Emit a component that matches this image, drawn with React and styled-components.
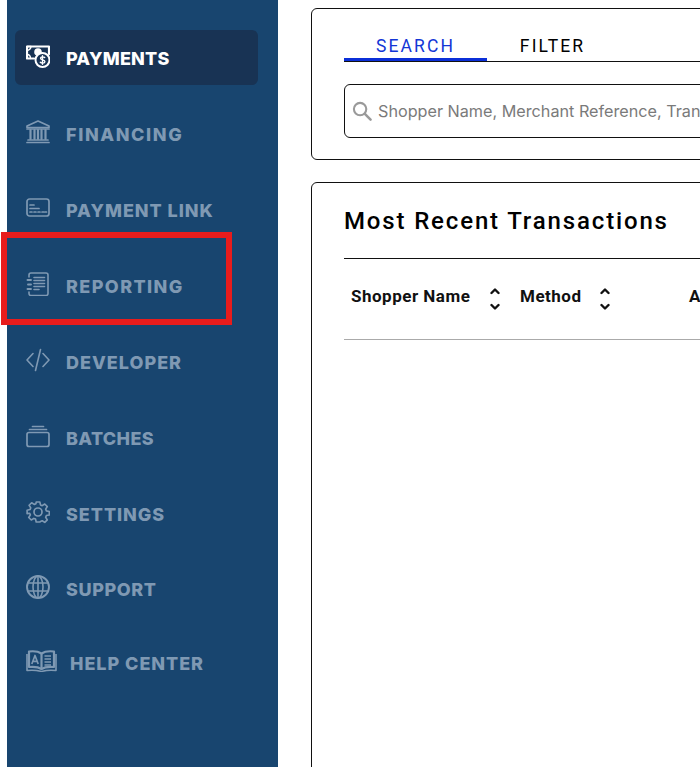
import React from 'react';
import styled, { createGlobalStyle } from 'styled-components';

const GlobalStyle = createGlobalStyle`
  html, body {
    margin: 0;
    padding: 0;
    background: #fff;
    overflow: hidden;
  }
`;

const Page = styled.div`
  position: relative;
  display: flex;
  width: 700px;
  height: 767px;
  padding-left: 7px;
  box-sizing: border-box;
  overflow: hidden;
`;

const Sidebar = styled.nav`
  flex: 0 0 271px;
  background: #18456f;
  padding: 30px 20px 0 8px;
  box-sizing: border-box;
`;

const NavItem = styled.div`
  display: flex;
  align-items: center;
  height: 55px;
  margin-bottom: ${(p) => p.$mb ?? 21}px;
  padding-left: 11px;
  gap: ${(p) => p.$gap || 16}px;
  border-radius: 6px;
  background: ${(p) => (p.$active ? '#183354' : 'transparent')};
  color: ${(p) => (p.$active ? '#ffffff' : '#7f99b3')};
  svg {
    flex: none;
    margin-top: -4px;
  }
`;

const NavLabel = styled.span`
  padding-top: 2px;
  font-family: Inter, "Liberation Sans", sans-serif;
  font-weight: 800;
  font-size: 18px;
  letter-spacing: ${(p) => p.$ls}px;
`;

const Highlight = styled.div`
  position: absolute;
  left: 1px;
  top: 232px;
  width: 231px;
  height: 93px;
  border: 6px solid #e81c1c;
  box-sizing: border-box;
`;

const Main = styled.main`
  flex: none;
  width: 900px;
  padding: 8px 0 0 33px;
  box-sizing: border-box;
`;

const Card = styled.section`
  border: 1px solid #111;
  border-radius: 6px;
  background: #fff;
  padding: ${(p) => p.$pad};
  height: ${(p) => p.$h}px;
  margin-bottom: 22px;
  box-sizing: border-box;
`;

const Tabs = styled.div`
  display: flex;
  height: 32px;
  border-bottom: 1px solid #111;
`;

const Tab = styled.div`
  width: ${(p) => p.$w}px;
  height: 32px;
  box-sizing: border-box;
  text-align: center;
  line-height: 34px;
  font-family: Roboto, "Liberation Sans", sans-serif;
  font-size: 17.5px;
  letter-spacing: 2.1px;
  color: ${(p) => (p.$active ? '#1336d6' : '#000')};
  border-bottom: ${(p) => (p.$active ? '3px solid #0b2fd8' : 'none')};
`;

const SearchBox = styled.div`
  display: flex;
  align-items: center;
  gap: 6px;
  height: 54px;
  margin-top: 22px;
  padding-left: 7px;
  border: 1px solid #111;
  border-radius: 6px;
  box-sizing: border-box;
  font-family: Inter, "Liberation Sans", sans-serif;
  font-size: 16.2px;
  color: #7a7a7a;
  white-space: nowrap;
`;

const Title = styled.h2`
  margin: 0;
  height: 75px;
  border-bottom: 1px solid #111;
  font-family: Roboto, "Liberation Sans", sans-serif;
  font-weight: 500;
  font-size: 24px;
  line-height: 76px;
  letter-spacing: 1.85px;
  color: #000;
`;

const HeaderRow = styled.div`
  display: flex;
  align-items: center;
  height: 80px;
  border-bottom: 1px solid #aaa;
  padding-left: 7px;
`;

const HeaderCell = styled.div`
  display: flex;
  align-items: center;
  justify-content: space-between;
  width: ${(p) => p.$w}px;
  padding-right: ${(p) => p.$pr || 0}px;
  box-sizing: border-box;
  font-family: Roboto, "Liberation Sans", sans-serif;
  font-weight: 700;
  font-size: 17px;
  letter-spacing: 0.5px;
  color: #111;
  white-space: nowrap;
`;

const HeaderLabel = styled.span`
  padding-bottom: 6px;
`;

const icon = { fill: 'none', stroke: 'currentColor', strokeWidth: 1.5, strokeLinecap: 'round', strokeLinejoin: 'round' };

const PaymentsIcon = () => (
  <svg width="24" height="24" viewBox="0 0 24 24" {...icon}>
    <path d="M1 2.500h22v7.500M1 2.500v12h7" strokeWidth="2.200" />
    <path d="M1 2.500h4c0 2-2 4-4 4M1 10.500c2 0 3.500 1.500 3.500 4" strokeWidth="1.400" />
    <circle cx="12" cy="8" r="3.800" fill="currentColor" stroke="none" />
    <circle cx="16.500" cy="16" r="7" fill="#183354" strokeWidth="2" />
    <path d="M18.700 13.500c-.6-.8-3.900-1.200-4.200.7-.3 2.200 4.600 1.200 4.400 3.500-.2 1.900-3.700 1.600-4.600.6M16.500 11.800v8.400" strokeWidth="1.400" />
  </svg>
);

const BankIcon = () => (
  <svg width="24" height="24" viewBox="0 0 24 24" {...icon}>
    <path d="M12 1 23 6v1.500H1V6z" strokeWidth="1.700" />
    <path d="M1 9h22M2 20h20M1 22.500h22" strokeWidth="1.700" />
    <path d="M4.500 10v9M8.500 10v9M12 10v9M15.500 10v9M19.500 10v9" strokeWidth="2.200" />
  </svg>
);

const LinkIcon = () => (
  <svg width="24" height="24" viewBox="0 0 24 24" {...icon}>
    <rect x="1" y="3" width="22" height="17" rx="2.500" strokeWidth="1.700" />
    <path d="M4 9h4M4 12.500h9" strokeWidth="1.700" />
    <path d="M4 16h2M8 16h2M12 16h2M16 16h2M19 16h1.500" strokeWidth="1.700" />
  </svg>
);

const ReportIcon = () => (
  <svg width="24" height="24" viewBox="0 0 24 24" {...icon}>
    <path d="M3 5V3a2 2 0 0 1 2-2h15a2 2 0 0 1 2 2v18.500a2 2 0 0 1-2 2H5a2 2 0 0 1-2-2V20" strokeWidth="1.600" />
    <path d="M8 5.500h10.500M8 8.500h10.500M8 11.500h10.500M8 14.500h10.500M8 17.500h5" strokeWidth="1.600" />
    <path d="M1.500 8h3.500M2 12.500h3M1.500 17h3.500" strokeWidth="1.900" />
  </svg>
);

const CodeIcon = () => (
  <svg width="24" height="24" viewBox="0 0 24 24" {...icon}>
    <path d="M7 5.500 1 12l6 6.500M17 5.500l6 6.500-6 6.500M14.500 1.500l-5 21" strokeWidth="1.600" />
  </svg>
);

const BatchIcon = () => (
  <svg width="24" height="24" viewBox="0 0 24 24" {...icon}>
    <rect x="1" y="8.500" width="22" height="14" rx="2" strokeWidth="1.700" />
    <path d="M3.500 5.500h17M6.500 2.500h11" strokeWidth="1.700" />
  </svg>
);

const GearIcon = () => (
  <svg width="24" height="24" viewBox="0 0 24 24" {...icon}>
    <circle cx="12" cy="12" r="4" strokeWidth="1.700" />
    <path d="M10 1h4l.7 3.200 1.900.8 2.800-1.800 2.800 2.800-1.800 2.800.8 1.900 3.200.7v3.800l-3.200.7-.8 1.900 1.800 2.800-2.800 2.800-2.800-1.800-1.900.8L14 23h-4l-.7-3.200-1.900-.8-2.800 1.800-2.800-2.800 1.800-2.800-.8-1.900L0 13.800V10l3.200-.7.8-1.900L2.200 4.600 5 1.800l2.800 1.800 1.900-.8z" transform="translate(1.100 1.100) scale(.91)" strokeWidth="1.800" />
  </svg>
);

const GlobeIcon = () => (
  <svg width="24" height="24" viewBox="0 0 24 24" {...icon}>
    <circle cx="12" cy="12" r="11" strokeWidth="1.900" />
    <ellipse cx="12" cy="12" rx="5" ry="11" strokeWidth="1.600" />
    <path d="M12 1v22M2 8h20M2 16h20" strokeWidth="1.600" />
  </svg>
);

const BookIcon = () => (
  <svg width="31" height="22" viewBox="0 0 31 22" fill="none" stroke="currentColor" strokeWidth="2.200" strokeLinejoin="round">
    <path d="M15.500 3.500C12.500 1.500 7 1 3 1.500V17c4.500-.5 9.500 0 12.500 2 3-2 8-2.500 12.500-2V1.500c-4-.5-9.500 0-12.500 2z" />
    <path d="M15.500 3.500V19" />
    <path d="M1 4v16.500c5-.6 10-.3 14.500 1 4.500-1.300 9.500-1.600 14.500-1V4" strokeWidth="1.600" />
    <path d="M5.800 14 9 5.500 12.200 14M7 11.300h4" strokeWidth="1.700" />
    <path d="M18.500 6H25M18.500 9H25M18.500 12H25M18.500 15H25" strokeWidth="1.700" />
  </svg>
);

const SearchIcon = () => (
  <svg width="20" height="20" viewBox="0 0 21 21" fill="none" stroke="#9a9a9a" strokeWidth="2.200" strokeLinecap="round">
    <circle cx="8.500" cy="8.500" r="6.500" />
    <path d="m13.500 13.500 6 6" strokeWidth="2.600" />
  </svg>
);

const SortIcon = () => (
  <svg width="10" height="22" viewBox="0 0 10 22" fill="none" stroke="#111" strokeWidth="2.400" strokeLinecap="round" strokeLinejoin="round">
    <path d="M1.500 5 5 1.500 8.500 5M1.500 17 5 20.500 8.500 17" />
  </svg>
);

const navItems = [
  { label: 'PAYMENTS', Icon: PaymentsIcon, ls: 0.2, active: true },
  { label: 'FINANCING', Icon: BankIcon, ls: 1.6 },
  { label: 'PAYMENT LINK', Icon: LinkIcon, ls: 0.95 },
  { label: 'REPORTING', Icon: ReportIcon, ls: 1.4 },
  { label: 'DEVELOPER', Icon: CodeIcon, ls: 1 },
  { label: 'BATCHES', Icon: BatchIcon, ls: 0.35 },
  { label: 'SETTINGS', Icon: GearIcon, ls: 0.95, mb: 20 },
  { label: 'SUPPORT', Icon: GlobeIcon, ls: 0.6, mb: 19 },
  { label: 'HELP CENTER', Icon: BookIcon, ls: 0.95, gap: 13, mb: 0 },
];

const App = () => (
  <Page>
    <GlobalStyle />
    <Sidebar>
      {navItems.map(({ label, Icon, ls, active, gap, mb }) => (
        <NavItem key={label} $active={active} $gap={gap} $mb={mb}>
          <Icon />
          <NavLabel $ls={ls}>{label}</NavLabel>
        </NavItem>
      ))}
    </Sidebar>
    <Main>
      <Card $pad="20px 32px 0" $h={152}>
        <Tabs>
          <Tab $active $w={143}>SEARCH</Tab>
          <Tab $w={131}>FILTER</Tab>
        </Tabs>
        <SearchBox>
          <SearchIcon />
          Shopper Name, Merchant Reference, Transaction ID
        </SearchBox>
      </Card>
      <Card $pad="0 32px" $h={640}>
        <Title>Most Recent Transactions</Title>
        <HeaderRow>
          <HeaderCell $w={169} $pr={20}><HeaderLabel>Shopper Name</HeaderLabel> <SortIcon /></HeaderCell>
          <HeaderCell $w={169} $pr={79}><HeaderLabel>Method</HeaderLabel> <SortIcon /></HeaderCell>
          <HeaderCell $w={120}><HeaderLabel>Amount</HeaderLabel></HeaderCell>
        </HeaderRow>
      </Card>
    </Main>
    <Highlight />
  </Page>
);

export default App;
